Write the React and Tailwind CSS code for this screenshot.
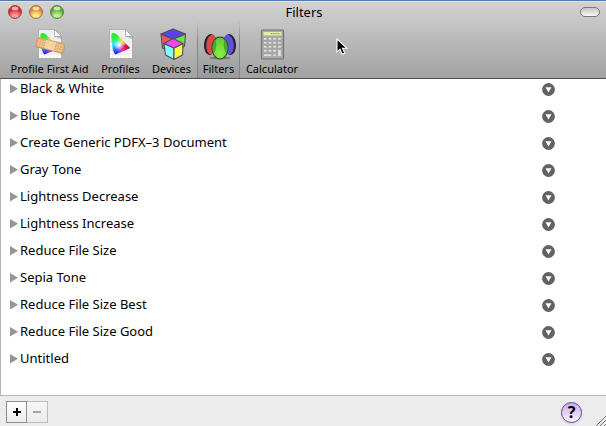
import React from "react";

const filters = [
  "Black & White",
  "Blue Tone",
  "Create Generic PDFX–3 Document",
  "Gray Tone",
  "Lightness Decrease",
  "Lightness Increase",
  "Reduce File Size",
  "Sepia Tone",
  "Reduce File Size Best",
  "Reduce File Size Good",
  "Untitled",
];

function ProfileSheet({ id, bandage = false }) {
  return (
    <svg viewBox="0 0 32 32" className="h-8 w-8" aria-hidden="true">
      <defs>
        <linearGradient id={`${id}-paper`} x1="0" y1="0" x2="0" y2="1">
          <stop offset="0" stopColor="#eeeeee" />
          <stop offset="1" stopColor="#ffffff" />
        </linearGradient>
        <linearGradient id={`${id}-base`} x1="0.1" y1="0" x2="0.3" y2="1">
          <stop offset="0" stopColor="#35e800" />
          <stop offset="0.28" stopColor="#2cf060" />
          <stop offset="0.52" stopColor="#39ecff" />
          <stop offset="0.78" stopColor="#2a6cff" />
          <stop offset="1" stopColor="#3a00e8" />
        </linearGradient>
        <radialGradient id={`${id}-red`} gradientUnits="userSpaceOnUse" cx="24" cy="20" r="13">
          <stop offset="0" stopColor="#ff0010" />
          <stop offset="0.3" stopColor="#ff0a50" />
          <stop offset="0.65" stopColor="#ff40d0" stopOpacity="0.65" />
          <stop offset="1" stopColor="#ff70ff" stopOpacity="0" />
        </radialGradient>
        <radialGradient id={`${id}-yellow`} gradientUnits="userSpaceOnUse" cx="18" cy="12" r="6">
          <stop offset="0" stopColor="#fff000" />
          <stop offset="0.5" stopColor="#f4f020" stopOpacity="0.7" />
          <stop offset="1" stopColor="#e8ff30" stopOpacity="0" />
        </radialGradient>
        <radialGradient id={`${id}-white`} gradientUnits="userSpaceOnUse" cx="14" cy="17" r="5">
          <stop offset="0" stopColor="#ffffff" />
          <stop offset="1" stopColor="#ffffff" stopOpacity="0" />
        </radialGradient>
      </defs>
      <path d="M4.5 2h16l7 7v22h-23z" fill="#000" opacity=".25" />
      <path d="M4.5 1.500h16l7 7v22h-23z" fill={`url(#${id}-paper)`} stroke="#a4a4a4" strokeWidth=".7" />
      <path d="M8 5v25M12 5v25M16 5v25M20 9v21M24 9v21M5 10h22M5 14h22M5 18h22M5 22h22M5 26h22" stroke="#dadada" strokeWidth=".5" />
      <g>
        {["base", "red", "yellow", "white"].map((layer) => (
          <path key={layer} d="M6.500 6Q8 4 11.500 6L25 20L10.500 26.500Q8 25 7 17Q6 10 6.500 6z" fill={`url(#${id}-${layer})`} />
        ))}
      </g>
      <path d="M20.500 1.500v7h7z" fill="#fafafa" stroke="#999" strokeWidth=".7" />
      <path d="M20.500 8.500l7 0v3z" fill="#777" opacity=".35" />
      {bandage && (
        <g transform="rotate(14 16 17.500)">
          <rect x="2" y="13.200" width="28.500" height="9.500" rx="2.500" fill="#6b451f" opacity=".3" />
          <rect x="2" y="12.500" width="28.500" height="9.500" rx="2.500" fill="#e7b273" stroke="#c98f50" strokeWidth=".6" />
          <rect x="11" y="12.800" width="10" height="8.900" fill="#f3cfa0" />
          <path d="M4 15h6M4 17.500h6M4 20h6M22.500 15h6M22.500 17.500h6M22.500 20h6M12 15h8M12 17.500h8M12 20h8" stroke="#faeacb" strokeWidth=".9" strokeDasharray="1 1.500" />
        </g>
      )}
    </svg>
  );
}

function DevicesIcon() {
  return (
    <svg viewBox="0 0 32 32" className="h-8 w-8" aria-hidden="true">
      <g stroke="#46525c" strokeWidth="1.100" strokeLinejoin="round">
        <path d="M5 6l12 5v15L6.500 20z" fill="#e65b55" />
        <path d="M29.500 6L17 11v15l11.500-8z" fill="#72e43c" />
        <path d="M5 6L17 1l12.500 5L17 11z" fill="#5a42ea" />
        <path d="M8 15.500l10 4.500v11.500L9.500 27z" fill="#84fbff" />
        <path d="M27 15.500L18 20v11.500l8.500-4.500z" fill="#fffb3c" />
        <path d="M8 15.500L17 10.500l10 5-9 4.500z" fill="#f546f2" />
      </g>
    </svg>
  );
}

function FiltersIcon() {
  return (
    <svg viewBox="0 0 32 32" className="h-8 w-8 overflow-visible" aria-hidden="true">
      <defs>
        <radialGradient id="lens-green" cx=".5" cy=".75" r=".65">
          <stop offset="0" stopColor="#8bf044" />
          <stop offset="1" stopColor="#66cc33" />
        </radialGradient>
        <clipPath id="lens-front"><ellipse cx="17" cy="20" rx="7.700" ry="10.800" /></clipPath>
      </defs>
      <ellipse cx="17" cy="30" rx="11" ry="1.300" fill="#333" opacity=".4" />
      <g transform="rotate(5 8 16.500)">
        <ellipse cx="7.300" cy="16.500" rx="6.300" ry="10.500" fill="#222" />
        <ellipse cx="8.700" cy="16.500" rx="5.500" ry="9.800" fill="#d84a4a" />
      </g>
      <g transform="rotate(-5 26 16.500)">
        <ellipse cx="26.700" cy="16.500" rx="6.300" ry="10.500" fill="#202038" />
        <ellipse cx="25.300" cy="16.500" rx="5.500" ry="9.800" fill="#6450dc" />
      </g>
      <ellipse cx="17" cy="20" rx="8" ry="11" fill="url(#lens-green)" stroke="#2b4a22" strokeWidth="1.100" />
      <g clipPath="url(#lens-front)" fill="#3c9d35" opacity=".8">
        <ellipse cx="7.800" cy="17" rx="5.500" ry="10" />
        <ellipse cx="26.200" cy="17" rx="5.500" ry="10" />
      </g>
    </svg>
  );
}

function CalculatorIcon() {
  return (
    <svg viewBox="0 0 32 32" className="h-8 w-8" aria-hidden="true">
      <rect x="5.500" y="2" width="22" height="29" rx="1" fill="#a9a9a6" stroke="#747474" strokeWidth="1.200" />
      <rect x="7.500" y="4" width="18" height="3.500" fill="#dff0a4" />
      <path d="M15 5.700h9" stroke="#93a562" strokeWidth="1.200" strokeDasharray="1.200 .6" />
      {[9.5, 13.5, 17.5, 21.5, 26].map((y, row) =>
        [7.5, 12.2, 16.900, 21.800].map((x, col) => {
          if (row === 4 && (col === 1 || col === 3)) return null;
          const wide = row === 4 && col === 0;
          const tall = row === 3 && col === 3;
          return <rect key={`${row}-${col}`} x={x} y={y} width={wide ? 8 : 3.4} height={tall ? 7 : 2.400} rx=".5" fill="#e2e2de" stroke="#8c8c8a" strokeWidth=".4" />;
        })
      )}
    </svg>
  );
}

const tools = [
  { label: "Profile First Aid", icon: <ProfileSheet id="aid" bandage />, width: "w-[91px]" },
  { label: "Profiles", icon: <ProfileSheet id="profiles" />, width: "w-[51px]" },
  { label: "Devices", icon: <DevicesIcon />, width: "w-[51px]" },
  { label: "Filters", icon: <FiltersIcon />, width: "w-[43px]" },
  { label: "Calculator", icon: <CalculatorIcon />, width: "w-[64px]" },
];

const lights = [
  { label: "Close", hi: "#ffc4c4", mid: "#d92b33", low: "#ff9a9a", edge: "#8a3a3e" },
  { label: "Minimize", hi: "#ffe9c8", mid: "#e38d33", low: "#fff08a", edge: "#94663a" },
  { label: "Zoom", hi: "#ddf2cc", mid: "#62a83a", low: "#c4f292", edge: "#4a7538" },
];

function TrafficLight({ label, hi, mid, low, edge }) {
  const id = `light-${label}`;
  return (
    <button type="button" aria-label={label} className="h-[14px] w-[14px]">
      <svg viewBox="0 0 14 14" className="h-full w-full" aria-hidden="true">
        <defs>
          <radialGradient id={id} cx=".5" cy=".95" r=".75">
            <stop offset="0" stopColor={low} />
            <stop offset=".3" stopColor={low} />
            <stop offset=".9" stopColor={mid} />
          </radialGradient>
        </defs>
        <circle cx="7" cy="7" r="6.400" fill={`url(#${id})`} stroke={edge} strokeWidth="1" />
        <ellipse cx="7" cy="3.400" rx="3.300" ry="1.800" fill={hi} opacity=".85" />
      </svg>
    </button>
  );
}

function FilterRow({ name }) {
  return (
    <li className="flex h-[27px] items-center pl-[9px] pr-[51px]">
      <button type="button" aria-label={`Expand ${name}`} className="w-[10px]">
        <svg viewBox="0 0 10 10" className="h-[10px] w-[10px]" aria-hidden="true">
          <path d="M0 0v9.500L8 4.700z" fill="#969696" />
        </svg>
      </button>
      <span className="flex-1 whitespace-nowrap">{name}</span>
      <button type="button" aria-label={`Options for ${name}`} className="pt-[2px]">
        <svg viewBox="0 0 13 13" className="h-[13px] w-[13px]" aria-hidden="true">
          <circle cx="6.500" cy="6.500" r="6.400" fill="#626262" />
          <path d="M3.500 4.300h6L6.500 9.500z" fill="#fff" />
        </svg>
      </button>
    </li>
  );
}

export default function App() {
  return (
    <div className="relative flex h-screen flex-col overflow-hidden bg-[#ececec] font-['Noto_Sans','Open_Sans',sans-serif] text-[13px] text-black">
      <header className="border-b border-t border-b-[#505050] border-t-[#527cae] bg-linear-to-b from-[#d3d3d3] to-[#a2a2a2]">
        <div className="grid h-5 grid-cols-[1fr_auto_1fr] items-center border-t border-[#e2e2e2] pl-2 pr-[6px]">
          <div className="flex gap-[7px]">
            {lights.map((light) => <TrafficLight key={light.label} {...light} />)}
          </div>
          <h1 className="leading-5">Filters</h1>
          <button type="button" aria-label="Toggle toolbar" className="h-[10px] w-5 justify-self-end rounded-full border border-[#777] bg-linear-to-b from-[#c5c5c5] to-[#fafafa]" />
        </div>
        <nav aria-label="Preference panes" className="flex h-[57px] pl-1">
          {tools.map(({ label, icon, width }) => {
            const active = label === "Filters";
            return (
              <button
                key={label}
                type="button"
                aria-pressed={active}
                className={`${width} flex shrink-0 flex-col items-center whitespace-nowrap pt-[7px] text-[11px] leading-[18px] ${active ? "border-x [border-image:linear-gradient(to_bottom,transparent,#858585_40%,#858585)_1] bg-linear-to-b from-black/0 to-black/5" : ""}`}
              >
                {icon}
                <span>{label}</span>
              </button>
            );
          })}
        </nav>
      </header>

      <main className="min-h-0 flex-1 overflow-hidden border-b border-l border-[#b4b4b4] bg-white">
        <ul className="-mt-1">
          {filters.map((name) => <FilterRow key={name} name={name} />)}
        </ul>
      </main>

      <footer className="flex h-[30px] items-center justify-between pl-[6px] pr-6 pt-[2px]">
        <div className="flex">
          <button type="button" aria-label="Add filter" className="flex h-[22px] w-[21px] items-center justify-center border border-[#8c8c8c] bg-linear-to-b from-white to-[#ececec]">
            <svg viewBox="0 0 8 8" className="h-2 w-2" aria-hidden="true"><path d="M4 0v8M0 4h8" stroke="#000" strokeWidth="2" /></svg>
          </button>
          <button type="button" aria-label="Remove filter" disabled className="flex h-[22px] w-[21px] items-center justify-center border border-l-0 border-[#bcbcbc] bg-linear-to-b from-[#f6f6f6] to-[#ececec]">
            <svg viewBox="0 0 8 8" className="h-2 w-2" aria-hidden="true"><path d="M0 4h8" stroke="#888" strokeWidth="1.500" /></svg>
          </button>
        </div>
        <button type="button" aria-label="Help" className="flex h-[21px] w-[21px] items-center justify-center rounded-full border border-[#67449a] bg-linear-to-b from-[#c9a9f0] to-[#fbf4ff] text-[16px] font-bold leading-5 shadow-sm">?</button>
      </footer>

      <svg viewBox="0 0 12 18" className="absolute left-[336px] top-[38px] h-[18px] w-3" aria-hidden="true">
        <path d="M1 1v13l3-2.800 2.200 5 2.500-1.100-2.200-4.800H11z" fill="#000" stroke="#fff" strokeWidth="1.100" />
      </svg>
      <svg viewBox="0 0 10 10" className="absolute bottom-0 right-0 h-[10px] w-[10px]" aria-hidden="true">
        <path d="M0 10L10 0M4 10l6-6M8 10l2-2" stroke="#757575" strokeWidth="1" />
      </svg>
    </div>
  );
}
